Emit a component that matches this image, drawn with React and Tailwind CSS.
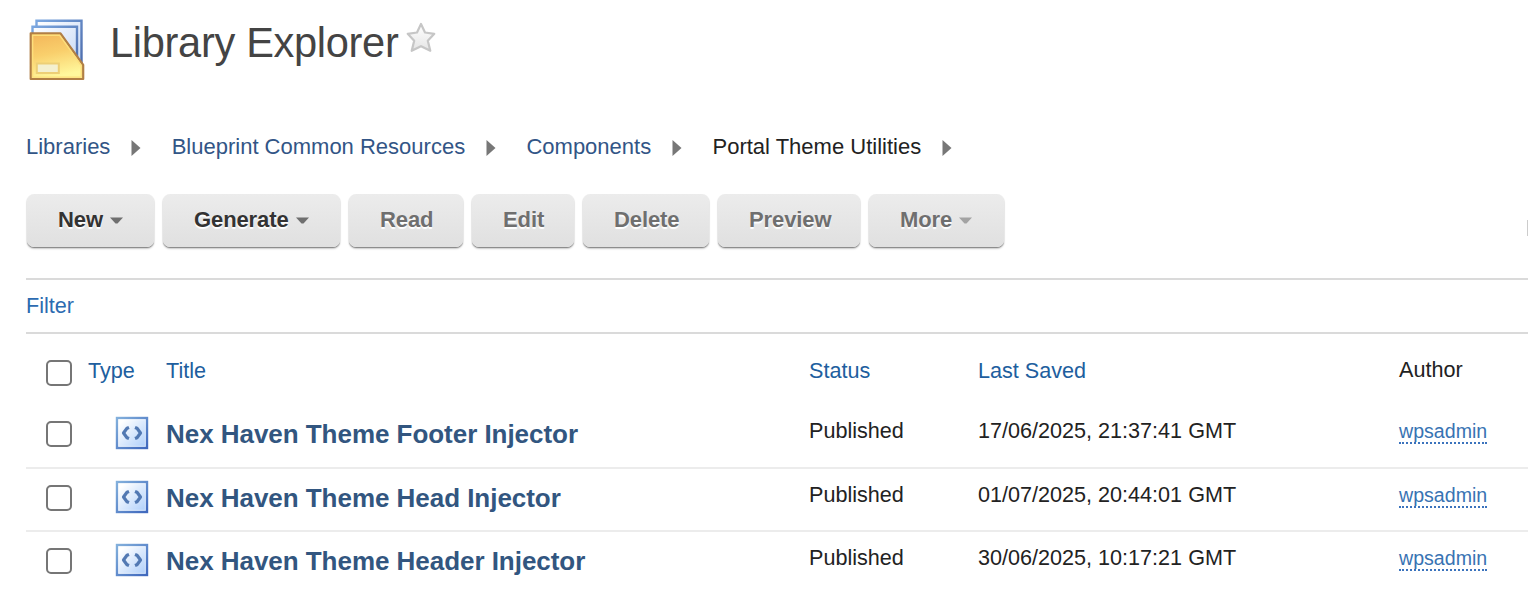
import React from "react";

function LibraryIcon() {
  return (
    <svg width="56" height="62" viewBox="0 0 56 62" className="block shrink-0">
      <defs>
        <linearGradient id="folder" x1="0" y1="0" x2="0.25" y2="1">
          <stop offset="0" stopColor="#f3b559" />
          <stop offset="0.5" stopColor="#f9cf6c" />
          <stop offset="1" stopColor="#fff79c" />
        </linearGradient>
        <linearGradient id="sheet" x1="0" y1="0" x2="1" y2="1">
          <stop offset="0" stopColor="#ffffff" />
          <stop offset="1" stopColor="#c3d6f5" />
        </linearGradient>
        <linearGradient id="sheetEdge" x1="0" y1="0" x2="1" y2="1">
          <stop offset="0" stopColor="#7ba7e0" />
          <stop offset="1" stopColor="#4a68a8" />
        </linearGradient>
      </defs>
      <path d="M7.5 1.8H52.500V52H7.500Z" fill="url(#sheet)" stroke="url(#sheetEdge)" strokeWidth="2.400" />
      <path d="M3.500 7.800H48V50H3.500Z" fill="url(#sheet)" stroke="url(#sheetEdge)" strokeWidth="2.400" />
      <path d="M1.700 14.300H31.500L54.200 46V60H1.700Z" fill="url(#folder)" stroke="#b17f45" strokeWidth="2.200" strokeLinejoin="round" />
      <path d="M3.600 58.100V16.200H30.500L52.300 46.600V58.100Z" fill="none" stroke="#fddf7c" strokeWidth="1.400" />
      <rect x="7.800" y="44.500" width="22" height="9.500" fill="#f4f0cf" stroke="#edcf76" strokeWidth="2" />
    </svg>
  );
}

function Star() {
  return (
    <svg width="30" height="31" viewBox="0 0 30 31" className="block shrink-0">
      <defs>
        <linearGradient id="star" x1="0" y1="0" x2="0" y2="1">
          <stop offset="0" stopColor="#ffffff" />
          <stop offset="1" stopColor="#e4e4e4" />
        </linearGradient>
      </defs>
      <path d="M15 2 L19 10.500 L28.300 11.800 L21.800 18.800 L24.300 28.800 L15 24.200 L5.700 28.800 L8.200 18.800 L1.700 11.800 L11 10.500Z" fill="url(#star)" stroke="#c6c6c6" strokeWidth="2.200" strokeLinejoin="round" />
    </svg>
  );
}

function Crumb({ children, className }) {
  return (
    <li className="flex items-center">
      <span className={className}>{children}</span>
      <svg width="10" height="16" viewBox="0 0 10 16" className="mt-[2px] ml-[21px] block">
        <path d="M0.500 0L9.500 8L0.500 16Z" fill="#777" />
      </svg>
    </li>
  );
}

function ToolButton({ label, className, caret }) {
  return (
    <button
      className={`flex h-[53px] items-center rounded-[7px] bg-linear-to-b from-[#ececec] to-[#e0e0e0] pl-[31px] text-[22px] font-bold tracking-[-0.100px] shadow-[0_1px_1px_#858585,0_2px_2px_rgba(0,0,0,0.18)] [text-shadow:0_2px_1px_#fff] ${className}`}
    >
      <span className="-mt-px">{label}</span>
      {caret && (
        <svg width="13" height="7" viewBox="0 0 13 7" className="ml-[7px] block">
          <path d="M0 0.500H13L7.500 6.500H5.500Z" fill={caret} />
        </svg>
      )}
    </button>
  );
}

function Checkbox() {
  return <input type="checkbox" className="block size-[26px] appearance-none rounded-[5px] border-2 border-[#767676] bg-white" />;
}

function ComponentIcon() {
  return (
    <svg width="34" height="34" viewBox="0 0 34 34" className="block">
      <defs>
        <linearGradient id="tile" x1="0" y1="0" x2="1" y2="1">
          <stop offset="0.150" stopColor="#ffffff" />
          <stop offset="1" stopColor="#aaccfa" />
        </linearGradient>
        <linearGradient id="tileEdge" x1="0" y1="0" x2="1" y2="1">
          <stop offset="0" stopColor="#83b0dc" />
          <stop offset="1" stopColor="#3f68bd" />
        </linearGradient>
      </defs>
      <rect x="2" y="2" width="30" height="30" fill="url(#tile)" stroke="url(#tileEdge)" strokeWidth="2.400" />
      <rect x="3.700" y="3.700" width="26.600" height="26.600" fill="none" stroke="#ffffff" strokeOpacity="0.500" />
      <path d="M14 11.500L12 12.300L8.500 17L12 21.700L14 22.500" fill="none" stroke="#5279b3" strokeWidth="3.200" strokeLinejoin="round" />
      <path d="M20 11.500L22 12.300L25.500 17L22 21.700L20 22.500" fill="none" stroke="#5279b3" strokeWidth="3.200" strokeLinejoin="round" />
    </svg>
  );
}

const columns = "grid grid-cols-[62px_78px_643px_169px_421px_1fr]";

const rows = [
  { title: "Nex Haven Theme Footer Injector", saved: "17/06/2025, 21:37:41 GMT", size: "h-[68px] pt-[15px] border-b-2" },
  { title: "Nex Haven Theme Head Injector", saved: "01/07/2025, 20:44:01 GMT", size: "h-[63px] pt-[11px] border-b-2" },
  { title: "Nex Haven Theme Header Injector", saved: "30/06/2025, 10:17:21 GMT", size: "h-[60px] pt-[11px]" },
];

export default function App() {
  return (
    <div className="h-[592px] w-full overflow-hidden bg-white pl-[26px] font-['Liberation_Sans',Arial,sans-serif] text-[22px] leading-[26px] text-[#222]">
      <header className="flex h-[132px] items-start pt-[19px]">
        <div className="ml-[3px]">
          <LibraryIcon />
        </div>
        <h1 className="ml-[25px] w-[296px] text-[41.600px] leading-[47px] tracking-[-0.320px] whitespace-nowrap text-[#444]">Library Explorer</h1>
        <div className="mt-[3px]">
          <Star />
        </div>
      </header>

      <nav className="h-[62px]">
        <ol className="flex gap-[30.300px] pt-[2px] text-[#325586]">
          <Crumb>Libraries</Crumb>
          <Crumb>Blueprint Common Resources</Crumb>
          <Crumb>Components</Crumb>
          <Crumb className="text-[#222]">Portal Theme Utilities</Crumb>
        </ol>
      </nav>

      <div className="flex h-[86px] items-start border-b-2 border-[#dadada] pl-px">
        <div className="flex gap-[9px]">
          <ToolButton label="New" className="w-[127px] text-[#333]" caret="#6f6f6f" />
          <ToolButton label="Generate" className="w-[177px] text-[#333]" caret="#6f6f6f" />
          <ToolButton label="Read" className="w-[114px] text-[#6f6f6f]" />
          <ToolButton label="Edit" className="w-[102px] text-[#6f6f6f]" />
          <ToolButton label="Delete" className="w-[126px] text-[#6f6f6f]" />
          <ToolButton label="Preview" className="w-[142px] text-[#6f6f6f]" />
          <ToolButton label="More" className="w-[135px] text-[#6f6f6f]" caret="#a3a3a3" />
        </div>
        <div className="mt-[26px] ml-auto h-4 w-px bg-[#ccc]" />
      </div>

      <div className="h-[54px] border-b-2 border-[#dadada] pt-[13px] text-[21.600px] text-[#2c6bb1]">Filter</div>

      <div className={`${columns} h-[67px] pt-[24px] text-[21.600px] text-[#205e9e]`}>
        <div className="pt-[2px] pl-[20px]">
          <Checkbox />
        </div>
        <div>Type</div>
        <div>Title</div>
        <div>Status</div>
        <div>Last Saved</div>
        <div className="-mt-px text-[#222]">Author</div>
      </div>

      {rows.map((r) => (
        <div key={r.title} className={`${columns} border-[#ececec] text-[21.600px] ${r.size}`}>
          <div className="pt-[5px] pl-[20px]">
            <Checkbox />
          </div>
          <div className="pl-[27px]">
            <ComponentIcon />
          </div>
          <div className="pt-[5px] text-[26px] font-bold tracking-[-0.040px] text-[#325680]">{r.title}</div>
          <div className="pt-[2px]">Published</div>
          <div className="pt-[2px]">{r.saved}</div>
          <div className="pt-[2px]">
            <a className="inline-block h-[24px] border-b-2 border-dotted border-[#3b73bd] text-[19.600px] leading-[22px] text-[#3873b3]">wpsadmin</a>
          </div>
        </div>
      ))}
    </div>
  );
}
